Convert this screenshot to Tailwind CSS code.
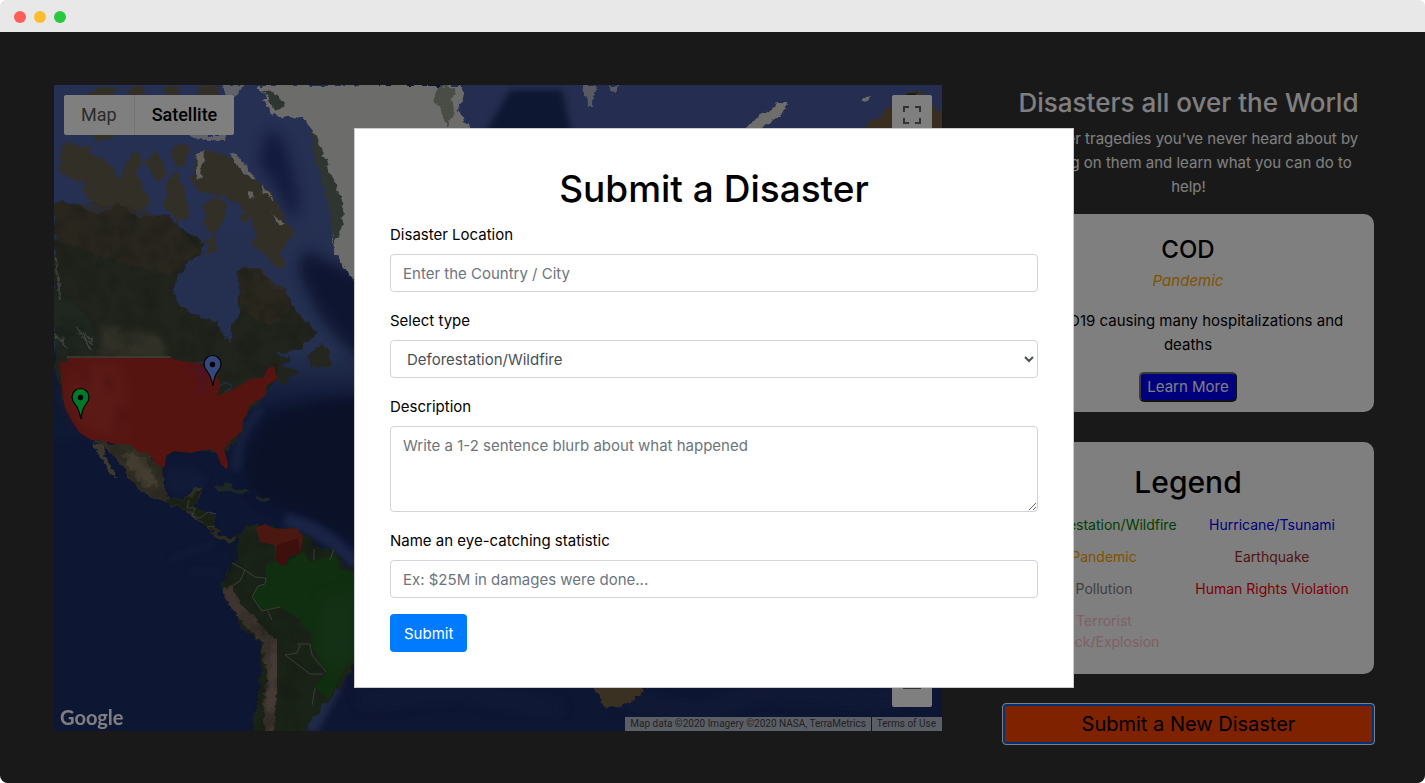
<!DOCTYPE html>
<html lang="en">
<head>
<meta charset="utf-8">
<meta name="viewport" content="width=device-width, initial-scale=1">
<title>Disasters all over the World</title>
<script src="https://cdn.jsdelivr.net/npm/@tailwindcss/browser@4"></script>
</head>
<body class="bg-white font-[Inter,sans-serif] text-[15px] leading-6 text-black">
<div class="flex min-h-screen flex-col">
  <header class="flex h-8 items-center gap-2 rounded-t-md bg-[#e8e8e8] px-[14px] pt-[2px]">
    <span class="size-3 rounded-full bg-[#ff5f57]"></span>
    <span class="size-3 rounded-full bg-[#febc2e]"></span>
    <span class="size-3 rounded-full bg-[#28c840]"></span>
  </header>

  <div class="relative flex-1 overflow-hidden rounded-b-lg bg-[#333333]">
    <main class="flex items-start gap-[60px] pt-[53px] pr-[50px] pb-[38px] pl-[54px]">
      <section aria-label="Map" class="relative h-[646px] min-w-0 flex-1 overflow-hidden bg-[#1e3474] font-[Roboto,sans-serif]">
        <svg class="absolute inset-0 h-full w-full" viewBox="54 85 888 646" preserveAspectRatio="xMinYMin slice" aria-hidden="true">
          <defs>
            <filter id="soft" x="-20%" y="-20%" width="140%" height="140%"><feGaussianBlur stdDeviation="7"/></filter>
            <filter id="soft2" x="-20%" y="-20%" width="140%" height="140%"><feGaussianBlur stdDeviation="3"/></filter>
            <filter id="rough" x="-5%" y="-5%" width="110%" height="110%">
              <feTurbulence type="fractalNoise" baseFrequency="0.12" numOctaves="3" seed="4" result="n"/>
              <feDisplacementMap in="SourceGraphic" in2="n" scale="9" xChannelSelector="R" yChannelSelector="G" result="d"/>
              <feGaussianBlur in="d" stdDeviation="0.6"/>
            </filter>
            <filter id="grain" x="0" y="0" width="100%" height="100%">
              <feTurbulence type="fractalNoise" baseFrequency="0.05" numOctaves="4" seed="9"/>
              <feColorMatrix values="0 0 0 0 0.02  0 0 0 0 0.03  0 0 0 0 0.02  2.2 0 0 0 -0.85"/>
            </filter>
            <clipPath id="landclip">
              <path d="M54 202L75 203L95 215L120 205L140 218L165 215L190 235L204 243L200 255L190 262L178 275L173 290L180 305L197 315L215 322L222 330L225 340L230 343L232 325L240 312L238 300L240 268L255 268L268 278L272 290L285 290L292 305L305 320L318 332L300 350L280 353L276 380L262 397L243 420L242 432L228 450L228 470L216 450L166 456L162 485L170 498L185 500L203 488L192 508L216 515L220 535L240 534L256 523L303 533L335 550L354 568V660L330 695L300 731H250L260 680L258 640L240 625L222 585L232 560L217 540L185 512L140 492L108 448L80 433L62 400L54 365Z"/>
            </clipPath>
            <linearGradient id="sea" x1="0" y1="0" x2="0" y2="1">
              <stop offset="0" stop-color="#4b60a8"/><stop offset=".8" stop-color="#4b60a0"/><stop offset="1" stop-color="#4b60a0" stop-opacity="0"/>
            </linearGradient>
          </defs>
          <rect x="54" y="85" width="888" height="646" fill="#1b2c66"/>
          <rect x="54" y="85" width="320" height="330" fill="url(#sea)"/>
          <path d="M40 350H62L66 410L80 440H40Z" fill="#1f3168" filter="url(#soft2)"/>
          <rect x="440" y="80" width="502" height="60" fill="#4a5ca0"/>
          <path d="M268 130Q282 132 290 160L300 205L292 220L278 190L258 160Z" fill="#26367a" filter="url(#soft)"/>
          <path d="M305 250L370 280V370L335 335L316 310L298 270Z" fill="#1c2b64" filter="url(#soft)"/>
          <path d="M510 90H562L572 135H484Z" fill="#1b2d62" filter="url(#soft2)"/>
          <path d="M370 395L320 400L285 410L262 425L248 450L245 480L260 500L300 515L370 550Z" fill="#142150" filter="url(#soft)"/>
          <path d="M262 408L246 428L238 448L236 470" fill="none" stroke="#2e427c" stroke-width="9" filter="url(#soft2)"/>
          <path d="M165 470Q190 460 208 478L200 490L175 497L163 485Z" fill="#22356e" filter="url(#soft2)"/>
          <path d="M285 520L310 528L330 540L360 568" fill="none" stroke="#34498a" stroke-width="14" filter="url(#soft2)"/>
          <path d="M190 571L222 573M170 560Q190 550 215 545" fill="none" stroke="#263a76" stroke-width="4" filter="url(#soft2)"/>
          <path d="M340 655L330 690L308 731" fill="none" stroke="#40548f" stroke-width="18" filter="url(#soft2)"/>
          <path d="M360 700L460 690L560 710M620 700L700 715L760 690L900 700" fill="none" stroke="#22346c" stroke-width="14" filter="url(#soft)"/>

          <g filter="url(#rough)">
            <g fill="#655f4d">
              <path d="M60 148L68 142L88 147L100 160L90 172L78 182L60 172Z"/>
              <path d="M84 175L98 156L112 166L119 180L125 168L130 154L141 156L136 175L146 188L150 205L135 212L115 206L96 207L83 190Z"/>
              <path d="M86 96L100 85L120 88L110 99ZM125 88L142 85L146 96L134 100ZM163 86L182 85L178 97L166 95ZM195 85H222L218 96L202 96Z"/>
              <path d="M144 162L158 150L168 172L160 182ZM171 146L190 145L186 165L174 166Z"/>
              <path d="M192 182L194 158L204 150L216 152L208 170L215 155L238 158L250 175L264 186L276 203L284 218L296 232L288 242L280 252L286 270L276 265L264 252L252 245L256 225L240 205L222 196L200 192Z"/>
              <path d="M168 178L176 172L184 190L190 215L178 222L164 208ZM205 203L220 196L228 212L214 236L204 225ZM205 240L215 236L218 250L208 254ZM240 215L247 214L246 222L240 220Z"/>
              <path d="M90 130L115 128L112 140L95 142ZM160 128L172 132L166 138Z"/>
            </g>
            <path d="M54 202L75 203L95 215L120 205L140 218L165 215L190 235L204 243L200 255L190 262L178 275L173 290L180 305L197 315L215 322L222 330L225 340L230 343L232 325L240 312L238 300L240 290L238 272L255 268L268 278L272 290L285 290L292 305L305 320L318 332L300 350L276 355L290 358L282 366L298 370L285 384L276 380L262 397L243 420L242 432L228 450L200 452L62 400L54 365Z" fill="#424839"/>
            <path d="M308 357L320 344L330 352L329 368L312 366Z" fill="#46503f"/>
            <path d="M54 202L75 203L120 205L165 215L200 250L170 275L120 262L54 240Z" fill="#5e5440" opacity=".6"/>
            <path d="M240 268L255 268L268 278L285 290L292 310L270 325L240 310Z" fill="#5d533e" opacity=".7"/>
            <path d="M54 285L90 320L100 355H54Z" fill="#405040"/>
            <path d="M56 256L60 300M78 328L92 350M56 335L68 348M84 332L94 345" stroke="#8b8e88" stroke-width="2" fill="none"/>
            <path d="M93 438L102 440L115 444L132 444L147 452L157 465L163 468L162 485L170 498L185 500L195 488L203 488L200 498L192 508L210 512L216 515L213 527L220 535L238 538L232 542L217 537L205 525L185 512L165 502L140 492L132 480L120 462L108 450Z" fill="#645f48"/>
            <path d="M94 442L103 445L108 462L116 477L110 474L98 454Z" fill="#7a725e"/>
            <path d="M122 452L145 458L158 485L145 488L130 470Z" fill="#94846c" opacity=".7"/>
            <path d="M170 498L185 500L203 488L195 508L216 515L213 530L190 512L165 502Z" fill="#34452c"/>
            <path d="M213 488L225 483L250 493L240 494ZM257 496L272 498L268 502L258 501Z" fill="#3c5048"/>
          </g>
          <path d="M100 325L140 328L165 337V358H100Z" fill="#6c6a56" opacity=".75" filter="url(#soft2)"/>
          <path d="M215 392Q224 378 232 386M195 365Q208 358 220 368M225 392L232 388" fill="none" stroke="#4a6396" stroke-width="2"/>

          <path d="M258 85L264 95L271 114L285 118L302 117L312 130L317 160L325 178L330 190L335 215L331 240L340 262L354 282L470 128L458 110L464 95L460 85Z" fill="#d8d9d5" filter="url(#rough)"/>
          <path d="M262 90L278 95L284 106L276 112ZM310 128L318 140L329 170L342 200L343 225L333 245L331 215L324 190L316 165Z" fill="#5e6a60" filter="url(#rough)"/>
          <path d="M440 85L456 88L450 100L456 112L446 128L442 112L434 100Z" fill="#94988d" filter="url(#rough)"/>
          <g fill="#dcdcd6" filter="url(#rough)">
            <path d="M222 84H243L235 96L226 95ZM185 134H228L226 141L195 139ZM228 152L238 156L250 172L258 180L250 178L240 168ZM262 182L272 200L264 194ZM272 214L286 223L280 226ZM248 190L256 198L250 199ZM196 154L205 150L202 176L195 180Z" opacity=".8"/>
            <path d="M582 85H597L592 108L586 100ZM608 85H619L615 95Z" opacity=".7"/>
            <path d="M744 130L755 118L770 111L778 103L786 104L784 112L770 122L758 130ZM862 100L868 96L866 102Z"/>
          </g>
          <path d="M862 130L875 120L888 110L895 102L912 91L924 93L930 105L946 112V130Z" fill="#705e40" filter="url(#rough)"/>
          <path d="M895 108L905 96L918 92L910 108L900 118Z" fill="#2d3e34" filter="url(#rough)"/>

          <path d="M238 538L245 528L256 523L262 527L290 527L303 533L315 546L335 550L345 566L356 570V662L345 682L330 698L314 718L300 735H250L258 702L262 660L260 642L240 626L225 597L222 582L232 565L238 552Z" fill="#35462f" filter="url(#rough)"/>
          <path d="M226 588L240 612L256 628L268 640L273 675L268 735" fill="none" stroke="#7d6b5e" stroke-width="11" filter="url(#rough)"/>
          <path d="M274 638L276 675L268 712" fill="none" stroke="#8a776a" stroke-width="10" filter="url(#rough)"/>
          <g clip-path="url(#landclip)"><rect x="54" y="190" width="300" height="541" filter="url(#grain)" opacity=".45"/></g>
          <path d="M266 564L275 561L285 566L290 560L304 551L309 562L336 555L340 570L356 572V660L345 668L338 682L329 699L315 688L326 672L318 656L311 645L312 635L302 625L300 620L280 607L262 611L252 598L258 586L266 584Z" fill="#205c20"/>
          <path d="M320 600L356 590V655L330 675L318 650Z" fill="#316538" opacity=".5" filter="url(#soft)"/>
          <path d="M256 527L266 524L272 528L285 529L297 528L303 537L300 553L290 554L286 560L288 563L281 565L275 560V545L260 542L258 535Z" fill="#963022"/>
          <path d="M277 545L298 538L300 553L288 557L288 563L280 565L275 560Z" fill="#7a201a"/>
          <path d="M232 563L245 570L255 577L266 578L265 584L258 586L252 597L262 611L280 607M245 570L240 581L232 586M268 611L272 620M300 645L297 653L285 655L310 674H323M297 644H310L312 655L326 672M315 688L312 705M314 549V560M334 549L330 560M189 500L187 508L195 508L192 516L200 518L208 512L216 514M207 527L215 526" fill="none" stroke="#777d70" stroke-width="1"/>

          <path d="M60 362L67 363V358H171L180 361L198 363L205 368L215 373L219 381V390L216 396L230 391L240 386L250 379L263 378L268 368L274 366L277 379L266 386V395L256 401L250 405L246 415L243 420L242 431L230 441L224 449L228 464L227 470L221 464L216 452L209 449L190 453L174 451L166 456L165 467L157 465L147 452L140 453L130 444L115 444L102 440L91 440L80 433L73 423L65 408L62 390Z" fill="#ac2822"/>
          <path d="M80 362H120L128 400L125 440L105 438L78 425L64 395Z" fill="#c04038" opacity=".5" filter="url(#soft)"/>
          <path d="M106 376L112 390M118 408L128 420M122 412L116 432M84 366L86 386" stroke="#7d1613" stroke-width="4" opacity=".5" filter="url(#soft2)"/>
          <path d="M67 357H171" stroke="#9a9888" stroke-width="1"/>
          <path d="M188 367Q202 362 214 371L206 374L203 393L199 392L200 374Z" fill="#982548" filter="url(#soft2)"/>
          <path d="M592 688L598 684H648L640 695L630 704L616 707L606 708L600 698Z" fill="#746246" filter="url(#rough)"/>

          <g stroke="#000" stroke-width="1.2">
            <path d="M81 419Q79 409 75 404Q72 401 72 397A8.5 8.5 0 0 1 89 397Q89 401 86 404Q82 409 81 419Z" fill="#00f04a"/>
            <path d="M213 386Q211 376 207 371Q204 368 204 364A8.5 8.5 0 0 1 221 364Q221 368 218 371Q214 376 213 386Z" fill="#6991fd"/>
          </g>
          <circle cx="80.500" cy="397.500" r="2.700"/><circle cx="212.500" cy="364.500" r="2.700"/>
        </svg>

        <div class="absolute top-[10px] left-[10px] flex h-10 rounded-xs bg-white text-[18px]">
          <button type="button" class="border-r border-[#e6e6e6] px-[17px] text-[#565656]">Map</button>
          <button type="button" class="px-[17px] font-medium">Satellite</button>
        </div>
        <button type="button" aria-label="Toggle fullscreen" class="absolute top-[10px] right-[10px] grid size-10 place-items-center rounded-xs bg-white">
          <svg viewBox="0 0 18 18" class="size-[18px]" fill="none" stroke="#666" stroke-width="2"><path d="M1 6V1H6M12 1H17V6M17 12V17H12M6 17H1V12"/></svg>
        </button>
        <button type="button" aria-label="Zoom out" class="absolute right-[10px] bottom-6 grid size-10 place-items-center rounded-xs bg-white">
          <svg viewBox="0 0 18 18" class="size-[18px]" fill="none" stroke="#666" stroke-width="2"><path d="M0 10H18"/></svg>
        </button>
        <a href="#" class="absolute bottom-0 left-[6px] font-[Lato,sans-serif] text-[20px] leading-7 font-bold text-white">Google</a>
        <div class="absolute right-0 bottom-0 flex gap-px text-[10px] leading-[14px] text-[#444]">
          <span class="bg-[#b8bccb] px-[5px]">Map data ©2020 Imagery ©2020 NASA, TerraMetrics</span>
          <a href="#" class="bg-[#b8bccb] pr-[6px] pl-[5px]">Terms of Use</a>
        </div>
      </section>

      <aside class="w-[373px] shrink-0 text-center">
        <h2 class="mb-[7px] pt-px text-[26px] leading-[34px] font-medium text-white">Disasters all over the World</h2>
        <p class="mb-[15px] px-2 text-white">Discover tragedies you've never heard about by clicking on them and learn what you can do to help!</p>

        <article class="mr-px mb-[30px] rounded-[10px] bg-white px-4 pt-5 pb-[10px]">
          <h3 class="mb-[3px] text-[24px] leading-8 font-medium">COD</h3>
          <p class="mb-4 text-[#ffa500] italic">Pandemic</p>
          <p class="mb-[15px]">COVID19 causing many hospitalizations and deaths</p>
          <button type="button" class="mx-auto block h-[30px] rounded-[5px] border-2 border-t-[#767676] border-r-[#222] border-b-[#222] border-l-[#767676] bg-[#0000ff] px-[6px] leading-[26px] text-white">Learn More</button>
        </article>

        <section class="mr-px mb-[29px] rounded-[10px] bg-white px-[18px] pt-5 pb-[22px]">
          <h2 class="mb-3 text-[30px] leading-10 font-medium">Legend</h2>
          <ul class="grid grid-cols-2 gap-y-[11px] text-[14px] leading-[21px]">
            <li class="px-1 text-[#008000]">Deforestation/Wildfire</li>
            <li class="px-1 text-[#0000ff]">Hurricane/Tsunami</li>
            <li class="px-1 text-[#ffa500]">Pandemic</li>
            <li class="px-1 text-[#a52a2a]">Earthquake</li>
            <li class="px-1 text-[#808080]">Pollution</li>
            <li class="px-1 text-[#ff0000]">Human Rights Violation</li>
            <li class="px-1 text-[#ffc0cb]">Terrorist<br>Attack/Explosion</li>
          </ul>
        </section>

        <button type="button" class="block h-[42px] w-full rounded-[4px] border border-white bg-[#ff4500] text-[20px] leading-9 inset-ring-2 inset-ring-[#0067f4]">Submit a New Disaster</button>
      </aside>
    </main>

    <div class="absolute inset-0 flex items-center justify-center bg-black/50 pt-px pl-[3px]">
      <div role="dialog" aria-modal="true" aria-labelledby="dialog-title" class="w-[720px] max-w-full border border-[#cccccc] bg-white p-[35px]">
        <h1 id="dialog-title" class="mb-2 text-center text-[37px] leading-[50px] font-medium">Submit a Disaster</h1>
        <form>
          <div class="mb-4">
            <label for="location" class="mb-[7px] block pt-px">Disaster Location</label>
            <input id="location" type="text" placeholder="Enter the Country / City" class="block h-[38px] w-full rounded-[4px] border border-[#ced4da] px-3 placeholder:text-[#6c757d]">
          </div>
          <div class="mb-4">
            <label for="type" class="mb-[7px] block pt-px">Select type</label>
            <select id="type" class="block h-[38px] w-full rounded-[4px] border border-[#ced4da] bg-white px-3 text-[#495057]">
              <option>Deforestation/Wildfire</option>
              <option>Hurricane/Tsunami</option>
              <option>Pandemic</option>
              <option>Earthquake</option>
              <option>Pollution</option>
              <option>Human Rights Violation</option>
              <option>Terrorist Attack/Explosion</option>
            </select>
          </div>
          <div class="mb-4">
            <label for="description" class="mb-[7px] block pt-px">Description</label>
            <textarea id="description" rows="3" placeholder="Write a 1-2 sentence blurb about what happened" class="block h-[86px] w-full rounded-[4px] border border-[#ced4da] px-3 py-[7px] placeholder:text-[#6c757d]"></textarea>
          </div>
          <div class="mb-4">
            <label for="statistic" class="mb-[7px] block pt-px">Name an eye-catching statistic</label>
            <input id="statistic" type="text" placeholder="Ex: $25M in damages were done..." class="block h-[38px] w-full rounded-[4px] border border-[#ced4da] px-3 placeholder:text-[#6c757d]">
          </div>
          <button type="submit" class="block h-[38px] rounded-[4px] bg-[#007bff] px-[14px] pt-px text-white">Submit</button>
        </form>
      </div>
    </div>
  </div>
</div>
</body>
</html>
